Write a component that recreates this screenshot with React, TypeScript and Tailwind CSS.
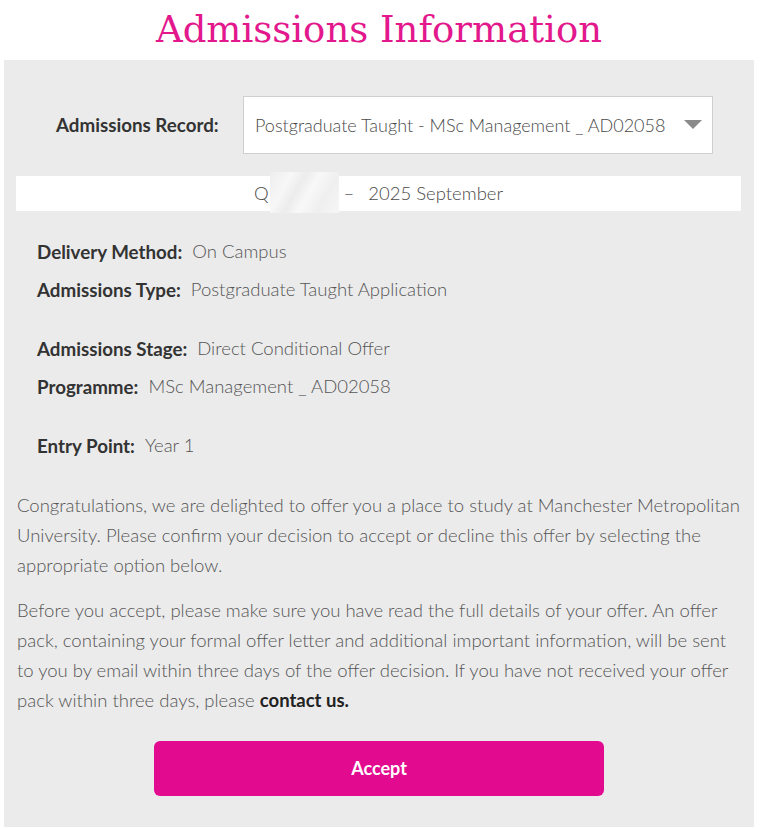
const details = [
  [
    { label: "Delivery Method:", value: "On Campus" },
    { label: "Admissions Type:", value: "Postgraduate Taught Application" },
  ],
  [
    { label: "Admissions Stage:", value: "Direct Conditional Offer" },
    { label: "Programme:", value: "MSc Management _ AD02058" },
  ],
  [{ label: "Entry Point:", value: "Year 1" }],
];

const App = () => {
  return (
    <div className="min-h-[828px] w-[768px] bg-white font-['Lato','Open_Sans',sans-serif]">
      {/* TITLE */}
      <h1 className="ml-[4px] h-[60px] w-[750px] text-center font-['DejaVu_Serif',serif] text-[37px] font-light leading-[60px] text-[#e2188c]">
        Admissions Information
      </h1>

      {/* PANEL */}
      <div className="ml-[4px] w-[750px] bg-[#ebebeb] pt-[36px] pb-[31px]">
        <div className="flex items-center pl-[52px]">
          <label className="w-[167px] text-[18.75px] font-bold text-[#333]">Admissions Record:</label>
          <div className="ml-[20px] flex h-[58px] w-[470px] items-center justify-between border border-[#cfcfcf] bg-white pl-[11px] pr-[9px]">
            <span className="text-[18px] font-light text-[#4a4a4a]">Postgraduate Taught - MSc Management _ AD02058</span>
            <svg width="18" height="10" viewBox="0 0 18 10" className="mr-[1px]">
              <polygon points="0,0 18,0 9,9" fill="#8a8a8a" />
            </svg>
          </div>
        </div>

        <div className="relative mt-[22px] ml-[12px] mr-[13px] flex h-[35px] items-center justify-center bg-white text-[18.5px] font-light text-[#4a4a4a]">
          <span>Q</span>
          <span className="inline-block w-[69px]" />
          <span className="ml-[6px]">–</span>
          <span className="ml-[14px]">2025 September</span>
          {/* redacted name */}
          <div className="absolute left-[254px] top-[-4px] h-[41px] w-[69px] bg-[linear-gradient(120deg,#eeeeee_0%,#f7f7f7_25%,#ececec_40%,#f8f8f8_55%,#efefef_75%,#f6f6f6_100%)]" />
        </div>

        <div className="mt-[22px] pl-[33px]">
          {details.map((group, gi) => (
            <div key={gi} className={gi > 0 ? "mt-[21px]" : ""}>
              {group.map((d) => (
                <div key={d.label} className="flex h-[38px] items-center">
                  <span className="text-[18.75px] font-bold text-[#333]">{d.label}</span>
                  <span className="ml-[10px] text-[18.5px] font-light text-[#555]">{d.value}</span>
                </div>
              ))}
            </div>
          ))}
        </div>

        <div className="mt-[25px] px-[13px] text-[18.5px] font-light leading-[30px] text-[#555]">
          <p>
            Congratulations, we are delighted to offer you a place to study at Manchester Metropolitan
            University. Please confirm your decision to accept or decline this offer by selecting the
            appropriate option below.
          </p>
          <p className="mt-[15px]">
            Before you accept, please make sure you have read the full details of your offer. An offer
            pack, containing your formal offer letter and additional important information, will be sent
            to you by email within three days of the offer decision. If you have not received your offer
            pack within three days, please <b className="font-bold text-[#222]">contact us.</b>
          </p>
        </div>

        <div className="mt-[26px] flex justify-center">
          <button className="h-[55px] w-[450px] rounded-[6px] bg-[#e20a8f] text-[18px] font-bold text-white">
            Accept
          </button>
        </div>
      </div>
    </div>
  );
};

export default App;
